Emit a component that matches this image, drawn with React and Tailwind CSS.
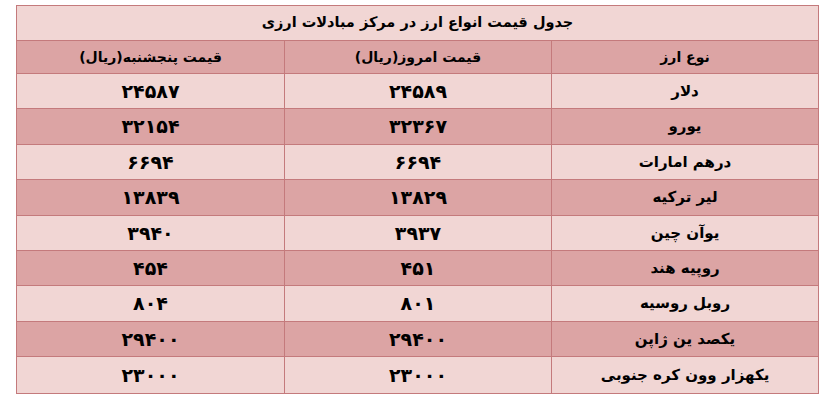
import React from "react";

const rows = [
  { name: "دلار", today: "۲۴۵۸۹", thu: "۲۴۵۸۷" },
  { name: "یورو", today: "۳۲۳۶۷", thu: "۳۲۱۵۴" },
  { name: "درهم امارات", today: "۶۶۹۴", thu: "۶۶۹۴" },
  { name: "لیر ترکیه", today: "۱۳۸۲۹", thu: "۱۳۸۳۹" },
  { name: "یوآن چین", today: "۳۹۳۷", thu: "۳۹۴۰" },
  { name: "روپیه هند", today: "۴۵۱", thu: "۴۵۴" },
  { name: "روبل روسیه", today: "۸۰۱", thu: "۸۰۴" },
  { name: "یکصد ین ژاپن", today: "۲۹۴۰۰", thu: "۲۹۴۰۰" },
  { name: "یکهزار وون کره جنوبی", today: "۲۳۰۰۰", thu: "۲۳۰۰۰" },
];

const App = () => {
  return (
    <div
      dir="rtl"
      className="w-[819px] h-[402px] bg-white pt-[5px] pl-[8px]"
      style={{ fontFamily: '"DejaVu Sans", "Noto Sans", sans-serif' }}
    >
      <div className="w-[803px] border border-[#c47a7c] text-black font-bold text-[15px]">
        {/* title */}
        <div className="h-[35px] bg-[#f1d6d4] flex items-center justify-center border-b border-[#c47a7c] text-[14.5px]">
          جدول قیمت انواع ارز در مرکز مبادلات ارزی
        </div>

        {/* header */}
        <div className="grid grid-cols-3 h-[33px] bg-[#dca4a4] border-b border-[#c47a7c] text-[14px]">
          <div className="flex items-center justify-center border-l border-[#c47a7c]">
            نوع ارز
          </div>
          <div className="flex items-center justify-center border-l border-[#c47a7c]">
            قیمت امروز(ریال)
          </div>
          <div className="flex items-center justify-center">
            قیمت پنجشنبه(ریال)
          </div>
        </div>

        {rows.map((r, i) => (
          <div
            key={r.name}
            className={`grid grid-cols-3 h-[35.4px] ${
              i % 2 === 0 ? "bg-[#f1d6d4]" : "bg-[#dca4a4]"
            } ${i < rows.length - 1 ? "border-b border-[#c47a7c]" : ""}`}
          >
            <div className="flex items-center justify-center border-l border-[#c47a7c]">
              {r.name}
            </div>
            <div className="flex items-center justify-center border-l border-[#c47a7c] text-[19px]">
              {r.today}
            </div>
            <div className="flex items-center justify-center text-[19px]">
              {r.thu}
            </div>
          </div>
        ))}
      </div>
    </div>
  );
};

export default App;
